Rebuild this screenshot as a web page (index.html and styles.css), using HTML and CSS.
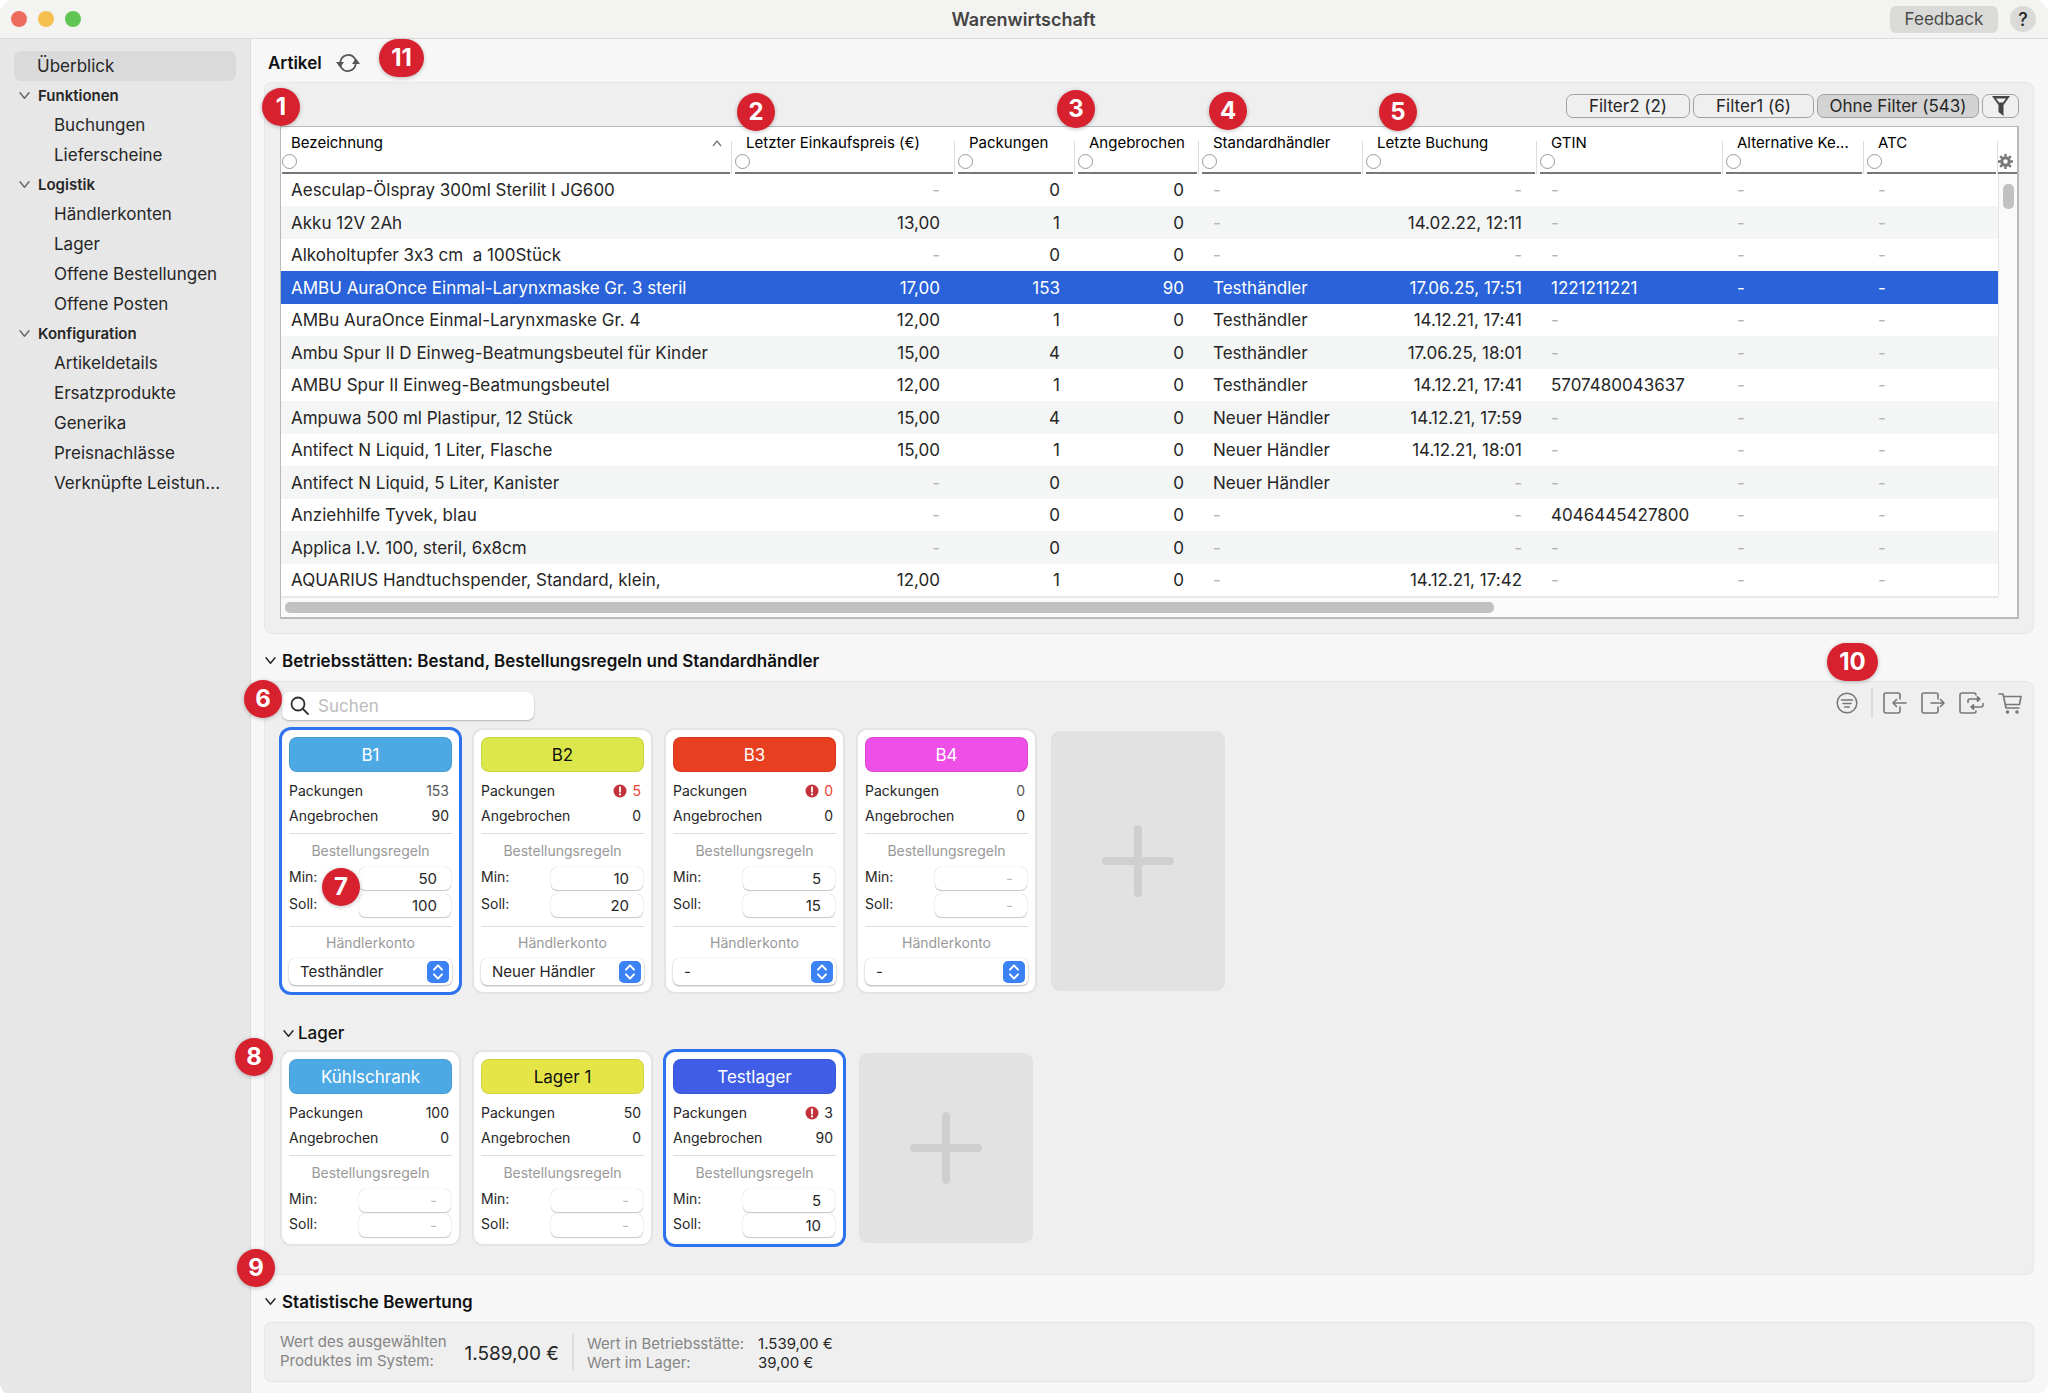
FILE: index.html
```html
<!DOCTYPE html>
<html lang="de">
<head>
    <meta charset="UTF-8">
    <meta name="viewport" content="width=device-width, initial-scale=1.0">
    <title>Warenwirtschaft</title>
    <link rel="stylesheet" href="styles.css">
</head>
<body>
    <!-- shared icons -->
    <svg class="defs" aria-hidden="true">
        <symbol id="chevron" viewBox="0 0 14 10"><path d="M2 2l5 6 5-6" fill="none" stroke="currentColor" stroke-width="1.6" stroke-linecap="round" stroke-linejoin="round"/></symbol>
        <symbol id="alert" viewBox="0 0 14 14"><circle cx="7" cy="7" r="6.5" fill="#c3323a"/><path d="M7 3.2v4.6" stroke="#fff" stroke-width="1.8" stroke-linecap="round"/><circle cx="7" cy="10.4" r="1.1" fill="#fff"/></symbol>
        <symbol id="stepper" viewBox="0 0 22 22"><rect width="22" height="22" rx="5" fill="#3b82f7"/><path d="M7 8.6l4-4.2 4 4.2M7 13.4l4 4.2 4-4.2" fill="none" stroke="#fff" stroke-width="2" stroke-linecap="round" stroke-linejoin="round"/></symbol>
        <symbol id="plus" viewBox="0 0 72 72"><path d="M36 4v64M4 36h64" stroke="#cfcfcf" stroke-width="8" stroke-linecap="round"/></symbol>
    </svg>

    <div class="window">
        <header class="titlebar">
            <div class="lights">
                <span class="light red"></span>
                <span class="light yellow"></span>
                <span class="light green"></span>
            </div>
            <h1>Warenwirtschaft</h1>
            <div class="titlebar-actions">
                <button class="feedback">Feedback</button>
                <button class="help">?</button>
            </div>
        </header>

        <div class="layout">
            <nav class="sidebar">
                <a href="#" class="nav-item top active">Überblick</a>
                <h2><svg class="chev"><use href="#chevron"/></svg>Funktionen</h2>
                <a href="#" class="nav-item">Buchungen</a>
                <a href="#" class="nav-item">Lieferscheine</a>
                <h2><svg class="chev"><use href="#chevron"/></svg>Logistik</h2>
                <a href="#" class="nav-item">Händlerkonten</a>
                <a href="#" class="nav-item">Lager</a>
                <a href="#" class="nav-item">Offene Bestellungen</a>
                <a href="#" class="nav-item">Offene Posten</a>
                <h2><svg class="chev"><use href="#chevron"/></svg>Konfiguration</h2>
                <a href="#" class="nav-item">Artikeldetails</a>
                <a href="#" class="nav-item">Ersatzprodukte</a>
                <a href="#" class="nav-item">Generika</a>
                <a href="#" class="nav-item">Preisnachlässe</a>
                <a href="#" class="nav-item">Verknüpfte Leistun...</a>
            </nav>

            <main>
                <div class="section-title article-title">
                    <h2>Artikel</h2>
                    <button class="icon-btn" aria-label="Aktualisieren">
                        <svg width="24" height="22" viewBox="0 0 24 22" fill="none" stroke="#555" stroke-width="1.8">
                            <path d="M4.300 10a8 8 0 0 1 14.200-4M19.700 12a8 8 0 0 1-14.200 4"/>
                            <path d="M20 11a8 8 0 0 0-1.500-5M4 11a8 8 0 0 0 1.500 5"/>
                            <path d="M16 12h8l-4-5.500zM0 10h8l-4 5.500z" fill="#555" stroke="none"/>
                        </svg>
                    </button>
                    <span class="badge wide-11">11</span>
                </div>

                <section class="panel articles">
                    <span class="badge badge-1">1</span>
                    <div class="filters">
                        <button class="filter two">Filter2 (2)</button>
                        <button class="filter one">Filter1 (6)</button>
                        <button class="filter none selected">Ohne Filter (543)</button>
                        <button class="filter funnel" aria-label="Filter bearbeiten">
                            <svg width="18" height="20" viewBox="0 0 18 20"><path d="M0 0h18l-6.500 9v11l-5-4V9zM4 2.500l3 4h4l3-4z" fill="#444" fill-rule="evenodd"/></svg>
                        </button>
                    </div>
                    <div class="table-box">
                        <div class="table-area">
                            <table>
                                <colgroup>
                                    <col><col class="c-price"><col class="c-packs"><col class="c-open"><col class="c-dealer"><col class="c-date"><col class="c-gtin"><col class="c-alt"><col class="c-atc">
                                </colgroup>
                                <thead>
                                    <tr>
                                        <th><div class="th">Bezeichnung<button class="ring" aria-label="Suche Bezeichnung"></button><svg class="sort" viewBox="0 0 10 8"><path d="M1 7l4-5 4 5" fill="none" stroke="#777" stroke-width="1.400"/></svg></div></th>
                                        <th><span class="badge badge-2">2</span><div class="th">Letzter Einkaufspreis (€)<button class="ring" aria-label="Suche Einkaufspreis"></button></div></th>
                                        <th><div class="th">Packungen<button class="ring" aria-label="Suche Packungen"></button></div></th>
                                        <th><span class="badge badge-3">3</span><div class="th">Angebrochen<button class="ring" aria-label="Suche Angebrochen"></button></div></th>
                                        <th><span class="badge badge-4">4</span><div class="th">Standardhändler<button class="ring" aria-label="Suche Standardhändler"></button></div></th>
                                        <th><span class="badge badge-5">5</span><div class="th">Letzte Buchung<button class="ring" aria-label="Suche Letzte Buchung"></button></div></th>
                                        <th><div class="th">GTIN<button class="ring" aria-label="Suche GTIN"></button></div></th>
                                        <th><div class="th">Alternative Ke...<button class="ring" aria-label="Suche Alternative Kennung"></button></div></th>
                                        <th><div class="th">ATC<button class="ring" aria-label="Suche ATC"></button></div></th>
                                    </tr>
                                </thead>
                                <tbody>
                                    <tr><td>Aesculap-Ölspray 300ml Sterilit I JG600</td><td class="num no">-</td><td class="num">0</td><td class="num">0</td><td class="no">-</td><td class="num no">-</td><td class="no">-</td><td class="no">-</td><td class="no">-</td></tr>
                                    <tr><td>Akku 12V 2Ah</td><td class="num">13,00</td><td class="num">1</td><td class="num">0</td><td class="no">-</td><td class="num">14.02.22, 12:11</td><td class="no">-</td><td class="no">-</td><td class="no">-</td></tr>
                                    <tr><td>Alkoholtupfer 3x3 cm&nbsp; a 100Stück</td><td class="num no">-</td><td class="num">0</td><td class="num">0</td><td class="no">-</td><td class="num no">-</td><td class="no">-</td><td class="no">-</td><td class="no">-</td></tr>
                                    <tr class="selected"><td>AMBU AuraOnce Einmal-Larynxmaske Gr. 3 steril</td><td class="num">17,00</td><td class="num">153</td><td class="num">90</td><td>Testhändler</td><td class="num">17.06.25, 17:51</td><td>1221211221</td><td class="no">-</td><td class="no">-</td></tr>
                                    <tr><td>AMBu AuraOnce Einmal-Larynxmaske Gr. 4</td><td class="num">12,00</td><td class="num">1</td><td class="num">0</td><td>Testhändler</td><td class="num">14.12.21, 17:41</td><td class="no">-</td><td class="no">-</td><td class="no">-</td></tr>
                                    <tr><td>Ambu Spur II D Einweg-Beatmungsbeutel für Kinder</td><td class="num">15,00</td><td class="num">4</td><td class="num">0</td><td>Testhändler</td><td class="num">17.06.25, 18:01</td><td class="no">-</td><td class="no">-</td><td class="no">-</td></tr>
                                    <tr><td>AMBU Spur II Einweg-Beatmungsbeutel</td><td class="num">12,00</td><td class="num">1</td><td class="num">0</td><td>Testhändler</td><td class="num">14.12.21, 17:41</td><td>5707480043637</td><td class="no">-</td><td class="no">-</td></tr>
                                    <tr><td>Ampuwa 500 ml Plastipur, 12 Stück</td><td class="num">15,00</td><td class="num">4</td><td class="num">0</td><td>Neuer Händler</td><td class="num">14.12.21, 17:59</td><td class="no">-</td><td class="no">-</td><td class="no">-</td></tr>
                                    <tr><td>Antifect N Liquid, 1 Liter, Flasche</td><td class="num">15,00</td><td class="num">1</td><td class="num">0</td><td>Neuer Händler</td><td class="num">14.12.21, 18:01</td><td class="no">-</td><td class="no">-</td><td class="no">-</td></tr>
                                    <tr><td>Antifect N Liquid, 5 Liter, Kanister</td><td class="num no">-</td><td class="num">0</td><td class="num">0</td><td>Neuer Händler</td><td class="num no">-</td><td class="no">-</td><td class="no">-</td><td class="no">-</td></tr>
                                    <tr><td>Anziehhilfe Tyvek, blau</td><td class="num no">-</td><td class="num">0</td><td class="num">0</td><td class="no">-</td><td class="num no">-</td><td>4046445427800</td><td class="no">-</td><td class="no">-</td></tr>
                                    <tr><td>Applica I.V. 100, steril, 6x8cm</td><td class="num no">-</td><td class="num">0</td><td class="num">0</td><td class="no">-</td><td class="num no">-</td><td class="no">-</td><td class="no">-</td><td class="no">-</td></tr>
                                    <tr><td>AQUARIUS Handtuchspender, Standard, klein,</td><td class="num">12,00</td><td class="num">1</td><td class="num">0</td><td class="no">-</td><td class="num">14.12.21, 17:42</td><td class="no">-</td><td class="no">-</td><td class="no">-</td></tr>
                                </tbody>
                            </table>
                            <div class="side">
                                <button class="gear" aria-label="Spalten konfigurieren">
                                    <svg width="15" height="15" viewBox="0 0 16 16"><circle cx="8" cy="8" r="4" fill="none" stroke="#777" stroke-width="3.200"/><path d="M8 0v3M8 13v3M0 8h3M13 8h3M2.300 2.300l2.200 2.200M11.500 11.500l2.200 2.200M2.300 13.700l2.200-2.200M11.500 4.500l2.200-2.200" stroke="#777" stroke-width="2.600"/></svg>
                                </button>
                                <div class="vscroll"><div class="thumb"></div></div>
                            </div>
                        </div>
                        <div class="hscroll"><div class="thumb"></div></div>
                    </div>
                </section>

                <div class="section-title collapsible">
                    <svg class="chev"><use href="#chevron"/></svg>
                    <h2>Betriebsstätten: Bestand, Bestellungsregeln und Standardhändler</h2>
                    <span class="badge badge-10">10</span>
                </div>

                <section class="panel sites">
                    <div class="toolbar">
                        <label class="search">
                            <svg width="20" height="20" viewBox="0 0 20 20" fill="none" stroke="#333" stroke-width="1.800" stroke-linecap="round"><circle cx="8" cy="8" r="6.500"/><path d="M13 13l5 5"/></svg>
                            <input type="search" placeholder="Suchen" aria-label="Suchen">
                        </label>
                        <span class="badge badge-6">6</span>
                        <div class="tools">
                            <button class="icon-btn" aria-label="Filtern">
                                <svg width="22" height="22" viewBox="0 0 22 22" fill="none" stroke="#777" stroke-width="1.500" stroke-linecap="round"><circle cx="11" cy="11" r="9.800"/><path d="M5.500 8h11M7 11.500h8M8.700 15h4.600"/></svg>
                            </button>
                            <span class="divider"></span>
                            <button class="icon-btn" aria-label="Einbuchen">
                                <svg width="24" height="22" viewBox="0 0 24 22" fill="none" stroke="#777" stroke-width="1.600" stroke-linecap="round" stroke-linejoin="round"><path d="M17 7V3a2 2 0 0 0-2-2H3a2 2 0 0 0-2 2v16a2 2 0 0 0 2 2h12a2 2 0 0 0 2-2v-4M23 11H10M13.500 7.500L10 11l3.500 3.500"/></svg>
                            </button>
                            <button class="icon-btn" aria-label="Ausbuchen">
                                <svg width="24" height="22" viewBox="0 0 24 22" fill="none" stroke="#777" stroke-width="1.600" stroke-linecap="round" stroke-linejoin="round"><path d="M17 7V3a2 2 0 0 0-2-2H3a2 2 0 0 0-2 2v16a2 2 0 0 0 2 2h12a2 2 0 0 0 2-2v-4M10 11h13M19.500 7.500L23 11l-3.500 3.500"/></svg>
                            </button>
                            <button class="icon-btn" aria-label="Umbuchen">
                                <svg width="25" height="22" viewBox="0 0 25 22" fill="none" stroke="#777" stroke-width="1.600" stroke-linecap="round" stroke-linejoin="round"><path d="M17 3a2 2 0 0 0-2-2H3a2 2 0 0 0-2 2v16a2 2 0 0 0 2 2h12a2 2 0 0 0 2-2M9 10.500V9a2 2 0 0 1 2-2h8M24 11.500V13a2 2 0 0 1-2 2h-8"/><path d="M18.500 4.800v4.400L21 7zM14.500 12.800v4.400L12 15z" fill="#777"/></svg>
                            </button>
                            <button class="icon-btn" aria-label="Bestellen">
                                <svg width="24" height="22" viewBox="0 0 24 22" fill="none" stroke="#777" stroke-width="1.600" stroke-linecap="round" stroke-linejoin="round"><path d="M1 2h4l3 14h13M5.500 4.500H23l-1.500 8h-14"/><circle cx="9.500" cy="20" r="1" fill="#777"/><circle cx="19" cy="20" r="1" fill="#777"/></svg>
                            </button>
                        </div>
                    </div>

                    <div class="cards">
                        <article class="card selected">
                            <button class="tag blue">B1</button>
                            <div class="stat"><span>Packungen</span><span class="value soft">153</span></div>
                            <div class="stat"><span>Angebrochen</span><span class="value">90</span></div>
                            <div class="rules">
                                <h4>Bestellungsregeln</h4>
                                <label class="field">Min: <input type="text" value="50"></label>
                                <label class="field">Soll: <input type="text" value="100"></label>
                            </div>
                            <span class="badge badge-7">7</span>
                            <div class="dealer">
                                <h4>Händlerkonto</h4>
                                <span class="select"><select aria-label="Händlerkonto B1"><option>Testhändler</option></select><svg><use href="#stepper"/></svg></span>
                            </div>
                        </article>
                        <article class="card">
                            <button class="tag lime">B2</button>
                            <div class="stat"><span>Packungen</span><span class="value low"><svg><use href="#alert"/></svg>5</span></div>
                            <div class="stat"><span>Angebrochen</span><span class="value">0</span></div>
                            <div class="rules">
                                <h4>Bestellungsregeln</h4>
                                <label class="field">Min: <input type="text" value="10"></label>
                                <label class="field">Soll: <input type="text" value="20"></label>
                            </div>
                            <div class="dealer">
                                <h4>Händlerkonto</h4>
                                <span class="select"><select aria-label="Händlerkonto B2"><option>Neuer Händler</option></select><svg><use href="#stepper"/></svg></span>
                            </div>
                        </article>
                        <article class="card">
                            <button class="tag red">B3</button>
                            <div class="stat"><span>Packungen</span><span class="value low"><svg><use href="#alert"/></svg>0</span></div>
                            <div class="stat"><span>Angebrochen</span><span class="value">0</span></div>
                            <div class="rules">
                                <h4>Bestellungsregeln</h4>
                                <label class="field">Min: <input type="text" value="5"></label>
                                <label class="field">Soll: <input type="text" value="15"></label>
                            </div>
                            <div class="dealer">
                                <h4>Händlerkonto</h4>
                                <span class="select"><select aria-label="Händlerkonto B3"><option>-</option></select><svg><use href="#stepper"/></svg></span>
                            </div>
                        </article>
                        <article class="card">
                            <button class="tag pink">B4</button>
                            <div class="stat"><span>Packungen</span><span class="value soft">0</span></div>
                            <div class="stat"><span>Angebrochen</span><span class="value">0</span></div>
                            <div class="rules">
                                <h4>Bestellungsregeln</h4>
                                <label class="field">Min: <input type="text" placeholder="-"></label>
                                <label class="field">Soll: <input type="text" placeholder="-"></label>
                            </div>
                            <div class="dealer">
                                <h4>Händlerkonto</h4>
                                <span class="select"><select aria-label="Händlerkonto B4"><option>-</option></select><svg><use href="#stepper"/></svg></span>
                            </div>
                        </article>
                        <button class="add" aria-label="Betriebsstätte hinzufügen"><svg><use href="#plus"/></svg></button>
                    </div>

                    <div class="storage">
                        <h3><svg class="chev"><use href="#chevron"/></svg>Lager</h3>
                        <span class="badge badge-8">8</span>
                    </div>
                    <div class="cards compact">
                        <article class="card">
                            <button class="tag blue">Kühlschrank</button>
                            <div class="stat"><span>Packungen</span><span class="value">100</span></div>
                            <div class="stat"><span>Angebrochen</span><span class="value">0</span></div>
                            <div class="rules">
                                <h4>Bestellungsregeln</h4>
                                <label class="field">Min: <input type="text" placeholder="-"></label>
                                <label class="field">Soll: <input type="text" placeholder="-"></label>
                            </div>
                        </article>
                        <article class="card">
                            <button class="tag yellow">Lager 1</button>
                            <div class="stat"><span>Packungen</span><span class="value">50</span></div>
                            <div class="stat"><span>Angebrochen</span><span class="value">0</span></div>
                            <div class="rules">
                                <h4>Bestellungsregeln</h4>
                                <label class="field">Min: <input type="text" placeholder="-"></label>
                                <label class="field">Soll: <input type="text" placeholder="-"></label>
                            </div>
                        </article>
                        <article class="card selected">
                            <button class="tag indigo">Testlager</button>
                            <div class="stat"><span>Packungen</span><span class="value"><svg><use href="#alert"/></svg>3</span></div>
                            <div class="stat"><span>Angebrochen</span><span class="value">90</span></div>
                            <div class="rules">
                                <h4>Bestellungsregeln</h4>
                                <label class="field">Min: <input type="text" value="5"></label>
                                <label class="field">Soll: <input type="text" value="10"></label>
                            </div>
                        </article>
                        <button class="add" aria-label="Lager hinzufügen"><svg><use href="#plus"/></svg></button>
                    </div>
                    <span class="badge badge-9">9</span>
                </section>

                <div class="section-title collapsible">
                    <svg class="chev"><use href="#chevron"/></svg>
                    <h2>Statistische Bewertung</h2>
                </div>

                <section class="panel summary">
                    <p class="muted">Wert des ausgewählten<br>Produktes im System:</p>
                    <p class="total">1.589,00 €</p>
                    <span class="divider"></span>
                    <dl>
                        <dt>Wert in Betriebsstätte:</dt><dd>1.539,00 €</dd>
                        <dt>Wert im Lager:</dt><dd>39,00 €</dd>
                    </dl>
                </section>
            </main>
        </div>
    </div>
</body>
</html>
```

FILE: styles.css
```css
* {
    box-sizing: border-box;
}

body {
    margin: 0;
    background: #fff;
    color: #262626;
    font-family: Inter, "Liberation Sans", sans-serif;
    font-size: 17px;
    font-feature-settings: "calt" 0;
}

h1, h2, h3, h4, p, dl, dd {
    margin: 0;
}

button, input, select {
    font: inherit;
    color: inherit;
    margin: 0;
    padding: 0;
    border: none;
    background: none;
}

.defs {
    position: absolute;
    width: 0;
    height: 0;
}

.window {
    display: flex;
    flex-direction: column;
    min-height: 100vh;
    border-radius: 14px;
    background: #f7f7f7;
    overflow: hidden;
}

/* title bar */
.titlebar {
    display: grid;
    grid-template-columns: 1fr auto 1fr;
    align-items: center;
    height: 39px;
    padding: 0 12px 0 11px;
    background: #f3f3f1;
    border-bottom: 1px solid #dcdcdc;
}

.titlebar h1 {
    font-size: 18px;
    font-weight: 600;
    color: #444;
}

.lights {
    display: flex;
    gap: 11px;
}

.light {
    width: 16px;
    height: 16px;
    border-radius: 50%;
}

.light.red { background: #ec6a5e; }
.light.yellow { background: #f4bf4f; }
.light.green { background: #61c554; }

.titlebar-actions {
    display: flex;
    justify-content: flex-end;
    align-items: center;
    gap: 12px;
}

.feedback {
    width: 108px;
    height: 27px;
    border-radius: 6px;
    background: #dadad8;
    color: #4a4a4a;
}

.help {
    width: 26px;
    height: 26px;
    border-radius: 50%;
    background: #dadad8;
    font-size: 18px;
    font-weight: 500;
}

.layout {
    display: flex;
    flex: 1;
}

/* sidebar */
.sidebar {
    width: 251px;
    flex: none;
    padding: 12px 14px;
    background: #e7e7e7;
    border-right: 1px solid #dadada;
}

.nav-item {
    display: block;
    height: 30px;
    line-height: 30px;
    padding-left: 40px;
    border-radius: 7px;
    color: inherit;
    text-decoration: none;
    white-space: nowrap;
}

.nav-item.top {
    padding-left: 23px;
}

.nav-item.active {
    background: #dadada;
}

.sidebar h2 {
    display: flex;
    align-items: center;
    gap: 7px;
    height: 29px;
    padding-left: 4px;
    font-size: 15px;
    font-weight: 600;
}

.chev {
    flex: none;
    width: 13px;
    height: 9px;
    color: #666;
}

/* main column */
main {
    flex: 1;
    min-width: 0;
    padding: 0 14px 14px 13px;
}

.section-title {
    position: relative;
    display: flex;
    align-items: center;
    gap: 5px;
    height: 47px;
    padding-top: 6px;
}

.section-title h2 {
    font-size: 17px;
    font-weight: 600;
    color: #111;
}

.section-title .chev {
    color: #222;
}

.article-title {
    height: 43px;
    padding: 4px 0 0 4px;
    gap: 14px;
}

.icon-btn {
    display: flex;
}

.panel {
    position: relative;
    border: 1px solid #e6e6e6;
    border-radius: 8px;
    background: #efefef;
}

.divider {
    width: 2px;
    background: #dcdcdc;
}

/* numbered markers */
.badge {
    position: absolute;
    z-index: 2;
    width: 38px;
    height: 38px;
    border-radius: 19px;
    background: #d7212e;
    box-shadow: 0 1px 4px rgba(0,0,0,0.25);
    color: #fff;
    font-size: 24px;
    font-weight: 700;
    line-height: 38px;
    text-align: center;
}

.badge.wide-11 { left: 115px; top: 0; width: 45px; }
.badge-1 { left: -3px; top: 5px; }
.badge-2 { left: 5px; top: -34px; }
.badge-3 { left: -18px; top: -37px; }
.badge-4 { left: 10px; top: -35px; }
.badge-5 { left: 16px; top: -34px; }
.badge-6 { left: -38px; top: -12px; }
.badge-7 { left: 40px; top: 138px; }
.badge-8 { left: -47px; top: 17px; }
.badge-9 { left: -28px; bottom: -13px; }
.badge.badge-10 { right: 156px; top: 9px; width: 51px; }

/* article table */
.articles {
    padding: 11px 14px 14px 15px;
}

.filters {
    display: flex;
    justify-content: flex-end;
    gap: 3px;
    margin-bottom: 8px;
}

.filter {
    height: 24px;
    border: 1px solid #a2a2a2;
    border-radius: 7px;
    line-height: 22px;
}

.filter.two { width: 124px; }
.filter.one { width: 121px; }
.filter.none { width: 162px; }

.filter.funnel {
    display: flex;
    align-items: center;
    justify-content: center;
    width: 37px;
}

.filter.selected {
    background: #d3d3d3;
}

.table-box {
    border: 2px solid #b9b9b9;
    border-top-width: 1px;
    border-left-width: 1px;
    background: #fafafa;
}

.table-area {
    display: flex;
}

table {
    flex: 1;
    min-width: 0;
    table-layout: fixed;
    border-collapse: collapse;
    background: #fff;
}

.c-price { width: 223px; }
.c-packs { width: 120px; }
.c-open { width: 124px; }
.c-dealer { width: 164px; }
.c-date { width: 174px; }
.c-gtin { width: 186px; }
.c-alt { width: 141px; }
.c-atc { width: 134px; }

th {
    position: relative;
    height: 47px;
    padding: 0 2px 0 3px;
    background: linear-gradient(#dcdcdc, #dcdcdc) right bottom / 1px 33px no-repeat;
    color: #000;
    font-size: 15px;
    font-weight: 400;
    text-align: left;
}

th:first-child {
    padding-left: 1px;
}

.th {
    position: relative;
    height: 47px;
    padding: 7px 0 0 11px;
    border-bottom: 2px solid #777;
    line-height: 18px;
    white-space: nowrap;
}

th:first-child .th {
    padding-left: 9px;
}

.ring {
    position: absolute;
    left: 0;
    bottom: 3px;
    width: 15px;
    height: 15px;
    border: 1px solid #999;
    border-radius: 50%;
    background: #fff;
}

.sort {
    position: absolute;
    right: 8px;
    top: 12px;
    width: 10px;
    height: 8px;
}

td {
    height: 32px;
    padding: 0 15px 0 14px;
    white-space: nowrap;
    overflow: hidden;
}

td:first-child {
    padding-left: 10px;
}

tbody tr:nth-child(even) {
    background: #f4f5f5;
}

tbody tr:nth-child(even) td {
    height: 33px;
}

.num {
    text-align: right;
}

.no {
    color: #b5b5b5;
}

tbody tr.selected,
.selected .no {
    background: #2962d9;
    color: #fff;
}

.side {
    display: flex;
    flex-direction: column;
    width: 19px;
}

.gear {
    display: flex;
    align-items: flex-end;
    height: 47px;
    padding-bottom: 3px;
    border-bottom: 2px solid #777;
    background: #fff;
}

.vscroll {
    flex: 1;
    padding: 10px 4px;
    border-left: 1px solid #e4e4e4;
}

.vscroll .thumb {
    width: 11px;
    height: 25px;
    border-radius: 5px;
    background: #c1c1c1;
}

.hscroll {
    margin-right: 19px;
    padding: 4px 10px 4px 4px;
    border-top: 2px solid #e8e8e8;
}

.hscroll .thumb {
    width: 71%;
    height: 11px;
    border-radius: 5px;
    background: #c1c1c1;
}

/* sites and storage cards */
.sites {
    padding: 10px 11px 30px 17px;
}

.toolbar {
    position: relative;
    display: flex;
    align-items: center;
    justify-content: space-between;
    height: 28px;
}

.search {
    display: flex;
    align-items: center;
    gap: 8px;
    width: 252px;
    height: 28px;
    padding-left: 8px;
    border-radius: 7px;
    background: #fff;
    box-shadow: 0 1px 2px rgba(0,0,0,0.25);
}

.search input {
    flex: 1;
    min-width: 0;
    outline: none;
}

::placeholder {
    color: #bcbcbc;
    opacity: 1;
}

.tools {
    display: flex;
    align-items: center;
    gap: 14px;
    height: 30px;
    margin-bottom: 6px;
}

.tools .divider {
    height: 30px;
    margin: 0 -4px 0 -1px;
}

.cards {
    display: flex;
    gap: 15px;
    margin-top: 10px;
}

.card {
    position: relative;
    width: 177px;
    padding: 7px;
    border-radius: 9px;
    background: #fff;
    box-shadow: 0 0 0 2px #e4e4e4;
}

.card.selected {
    box-shadow: 0 0 0 3px #2f72ee;
}

.tag {
    display: block;
    width: 100%;
    height: 35px;
    margin-bottom: 6px;
    border-radius: 8px;
    box-shadow: inset 0 0 0 1px rgba(0,0,0,0.08);
    color: #fff;
}

.tag.blue { background: #4da9e4; }
.tag.lime { background: #dbe74a; color: #111; }
.tag.red { background: #e73f20; }
.tag.pink { background: #ed4fe7; }
.tag.yellow { background: #e5e548; color: #111; }
.tag.indigo { background: #3f5de6; }

.stat {
    display: flex;
    justify-content: space-between;
    padding-right: 3px;
    font-size: 14px;
    line-height: 25px;
}

.value {
    display: flex;
    align-items: center;
    gap: 5px;
}

.value svg {
    width: 14px;
    height: 14px;
}

.value.soft { color: #555; }
.value.low { color: #ee4338; }

.rules, .dealer {
    margin-top: 5px;
    border-top: 1px solid #dedede;
}

.card h4 {
    font-size: 14px;
    font-weight: 400;
    line-height: 33px;
    color: #999;
    text-align: center;
}

.field {
    display: flex;
    justify-content: space-between;
    font-size: 14px;
    line-height: 20px;
    padding-right: 1px;
}

.field + .field {
    margin-top: 4px;
}

.field input {
    width: 92px;
    height: 23px;
    padding-right: 14px;
    border-radius: 6px;
    background: #fff;
    box-shadow: 0 1px 1px rgba(0,0,0,0.2), 0 0 1px rgba(0,0,0,0.3);
    font-size: 15px;
    text-align: right;
}

.dealer {
    margin-top: 9px;
}

.dealer h4 {
    line-height: 31px;
}

.select {
    position: relative;
    display: block;
}

.select select {
    display: block;
    width: 100%;
    height: 27px;
    padding-left: 11px;
    border-radius: 6px;
    background: #fff;
    box-shadow: 0 1px 2px rgba(0,0,0,0.3), 0 0 1px rgba(0,0,0,0.2);
    font-size: 15px;
    appearance: none;
}

.select svg {
    position: absolute;
    right: 3px;
    top: 3px;
    width: 22px;
    height: 22px;
    pointer-events: none;
}

.add {
    display: flex;
    align-items: center;
    justify-content: center;
    width: 174px;
    margin: 1px;
    border-radius: 9px;
    background: #e2e2e2;
}

.add svg {
    width: 72px;
    height: 72px;
}

.storage {
    position: relative;
    margin-top: 29px;
}

.storage h3 {
    display: flex;
    align-items: center;
    gap: 3px;
    font-size: 17px;
    font-weight: 500;
    line-height: 24px;
    color: #111;
}

.storage .chev {
    color: #222;
}

.compact {
    margin-top: 7px;
}

.compact .field + .field {
    margin-top: 2px;
}

/* summary */
.summary {
    display: flex;
    align-items: center;
    height: 60px;
    padding-left: 15px;
    font-size: 15px;
    line-height: 19px;
}

.muted, dt {
    color: #858585;
}

.muted {
    margin-bottom: 3px;
}

.total {
    margin: 3px 13px 0 18px;
    font-size: 19px;
}

.summary .divider {
    height: 38px;
}

dl {
    display: grid;
    grid-template-columns: auto auto;
    column-gap: 14px;
    margin: 2px 0 0 13px;
}
```
